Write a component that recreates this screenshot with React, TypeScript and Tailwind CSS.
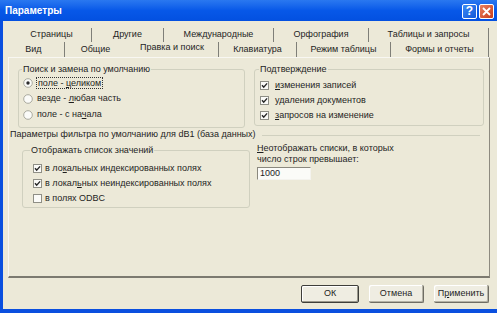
import React from 'react';

const Radio = ({ on }: { on: boolean }) => (
  <svg width="10" height="10" viewBox="0 0 10 10" className="shrink-0">
    <circle cx="5" cy="5" r="4.3" fill="#fbfbf8" stroke="#a3a397" strokeWidth="0.9" />
    {on && <circle cx="5" cy="5" r="1.7" fill="#2b2b2b" />}
  </svg>
);

const Check = ({ on }: { on: boolean }) => (
  <svg width="9" height="9" viewBox="0 0 9 9" className="shrink-0">
    <rect x="0.5" y="0.5" width="8" height="8" fill="#fbfbf8" stroke="#8f8f86" />
    {on && <path d="M2 4.3 L3.7 6.1 L7.1 2.4" fill="none" stroke="#262626" strokeWidth="1.4" />}
  </svg>
);

const U = ({ children }: { children: React.ReactNode }) => <span className="underline underline-offset-1">{children}</span>;

const rowTop = [
  { label: 'Страницы', w: 'w-[80px]' },
  { label: 'Другие', w: 'w-[72px]' },
  { label: 'Международные', w: 'w-[110px]' },
  { label: 'Орфография', w: 'w-[95px]' },
  { label: 'Таблицы и запросы', w: 'w-[120px]' },
];

const rowFront = [
  { label: 'Вид', w: 'w-[62px]', sep: true },
  { label: 'Общие', w: 'w-[61px]', sep: false },
  { label: 'Правка и поиск', w: 'w-[93px]', sep: true, active: true },
  { label: 'Клавиатура', w: 'w-[78px]', sep: true },
  { label: 'Режим таблицы', w: 'w-[94px]', sep: true },
  { label: 'Формы и отчеты', w: 'w-[98px]', sep: true },
];

export default function App() {
  return (
    <div className="w-[497px] h-[313px] overflow-hidden flex flex-col bg-[#0a4fdf] font-['Liberation_Sans',Arial,sans-serif] text-[9px] text-[#1e1e1e] select-none">
      {/* Title bar */}
      <div className="h-[21px] shrink-0 flex items-center justify-between pl-[5px] pr-[3px] bg-gradient-to-b from-[#2a78f0] via-[#0758e8] to-[#0350e0]">
        <span className="text-white font-bold text-[10px] leading-none">Параметры</span>
        <div className="flex items-center gap-[2px] mt-[1px]">
          <div className="w-[15px] h-[15px] rounded-[2px] border border-white bg-gradient-to-br from-[#3c8bf5] to-[#1456d8] flex items-center justify-center text-white font-bold text-[12px] leading-none">?</div>
          <div className="w-[15px] h-[15px] rounded-[2px] border border-white bg-gradient-to-br from-[#e9805f] to-[#c73a17] flex items-center justify-center">
            <svg width="9" height="9" viewBox="0 0 9 9">
              <path d="M1 1 L8 8 M8 1 L1 8" stroke="#fff" strokeWidth="1.8" />
            </svg>
          </div>
        </div>
      </div>

      {/* Body */}
      <div className="flex-1 ml-[3px] mb-[4px] bg-[#ece9d8] flex flex-col pt-[7px]">
        {/* Tab rows */}
        <div className="flex h-[14px] ml-[9px]">
          {rowTop.map((t) => (
            <div key={t.label} className={`${t.w} flex items-center justify-center border-r border-[#7f7f78]`}>
              {t.label}
            </div>
          ))}
        </div>
        <div className="flex h-[15px]">
          {rowFront.map((t) => (
            <div
              key={t.label}
              className={`${t.w} flex items-center justify-center ${t.sep ? 'border-r border-[#7f7f78]' : ''} ${t.active ? 'pb-[3px]' : ''}`}
            >
              {t.label}
            </div>
          ))}
        </div>

        {/* Tab panel */}
        <div className="ml-[5px] w-[482px] h-[221px] shrink-0 border-t border-l border-[#f8f7f2] border-r border-r-[#8d8a7f] border-b-2 border-b-[#7c7a70] flex flex-col pt-[5px]">
          <div className="flex items-start gap-[9px] ml-[9px]">
            <fieldset className="w-[227px] border border-[#d0d0bf] rounded-[3px] pb-[4px]">
              <legend className="ml-[3px] px-[1px] leading-[12px]">Поиск и замена по умолчанию</legend>
              <div className="flex items-center h-[16px] pl-[4px] gap-[3px]">
                <Radio on />
                <span className="border border-dotted border-[#333] px-[1px] leading-[10px]">поле - <U>ц</U>еликом</span>
              </div>
              <div className="flex items-center h-[16px] pl-[4px] gap-[4px]">
                <Radio on={false} />
                <span>везде - <U>л</U>юбая часть</span>
              </div>
              <div className="flex items-center h-[16px] pl-[4px] gap-[4px]">
                <Radio on={false} />
                <span>поле - с на<U>ч</U>ала</span>
              </div>
            </fieldset>

            <fieldset className="w-[230px] border border-[#d0d0bf] rounded-[3px] pt-[3px] pb-[2px]">
              <legend className="ml-[4px] px-[1px] leading-[12px]">Подтверждение</legend>
              <div className="flex items-center h-[15px] pl-[5px] gap-[6px]">
                <Check on />
                <span><U>и</U>зменения записей</span>
              </div>
              <div className="flex items-center h-[15px] pl-[5px] gap-[6px]">
                <Check on />
                <span>у<U>д</U>аления документов</span>
              </div>
              <div className="flex items-center h-[15px] pl-[5px] gap-[6px]">
                <Check on />
                <span><U>з</U>апросов на изменение</span>
              </div>
            </fieldset>
          </div>

          <div className="flex items-center h-[12px] ml-[1px] mr-[9px] mt-[1px]">
            <span className="whitespace-nowrap">Параметры фильтра по умолчанию для dB1 (база данных)</span>
            <div className="flex-1 h-px bg-[#d0d0bf] ml-[6px]" />
          </div>

          <div className="flex items-start gap-[7px] ml-[13px] mt-[3px]">
            <fieldset className="w-[228px] border border-[#d0d0bf] rounded-[3px] pt-[5px] pb-[1px]">
              <legend className="ml-[7px] px-[1px] leading-[12px]">Отображать список значений</legend>
              <div className="flex items-center h-[15px] pl-[10px] gap-[3px]">
                <Check on />
                <span>в ло<U>к</U>альных индексированных полях</span>
              </div>
              <div className="flex items-center h-[15px] pl-[10px] gap-[3px]">
                <Check on />
                <span>в локал<U>ь</U>ных неиндексированных полях</span>
              </div>
              <div className="flex items-center h-[15px] pl-[10px] gap-[3px]">
                <Check on={false} />
                <span>в полях ODBC</span>
              </div>
            </fieldset>

            <div className="flex flex-col leading-[11px] -mt-[1px]">
              <span><U>Н</U>еотображать списки, в которых</span>
              <span>число строк превышает:</span>
              <div className="mt-[2px] w-[54px] h-[13px] bg-[#fbfbf8] border-t border-l border-[#8a887e] border-b border-r border-b-[#f4f3ee] border-r-[#f4f3ee] flex items-center pl-[2px]">
                1000
              </div>
            </div>
          </div>
        </div>

        {/* Buttons */}
        <div className="flex justify-end items-center mt-[7px] pr-[8px] gap-[10px]">
          <div className="w-[58px] h-[18px] flex items-center justify-center border border-[#3e3e3a] rounded-[2px] shadow-[inset_-1px_-1px_0_#9a988c,inset_1px_1px_0_#fff] bg-[#efede2]">
            ОК
          </div>
          <div className="w-[55px] h-[18px] flex items-center justify-center border-r border-b border-[#6f6d64] rounded-[2px] shadow-[inset_-1px_-1px_0_#b5b3a6,inset_1px_1px_0_#fff] bg-[#efede2]">
            Отмена
          </div>
          <div className="w-[55px] h-[18px] flex items-center justify-center border-r border-b border-[#6f6d64] rounded-[2px] shadow-[inset_-1px_-1px_0_#b5b3a6,inset_1px_1px_0_#fff] bg-[#efede2]">
            П<U>р</U>именить
          </div>
        </div>
      </div>
    </div>
  );
}
